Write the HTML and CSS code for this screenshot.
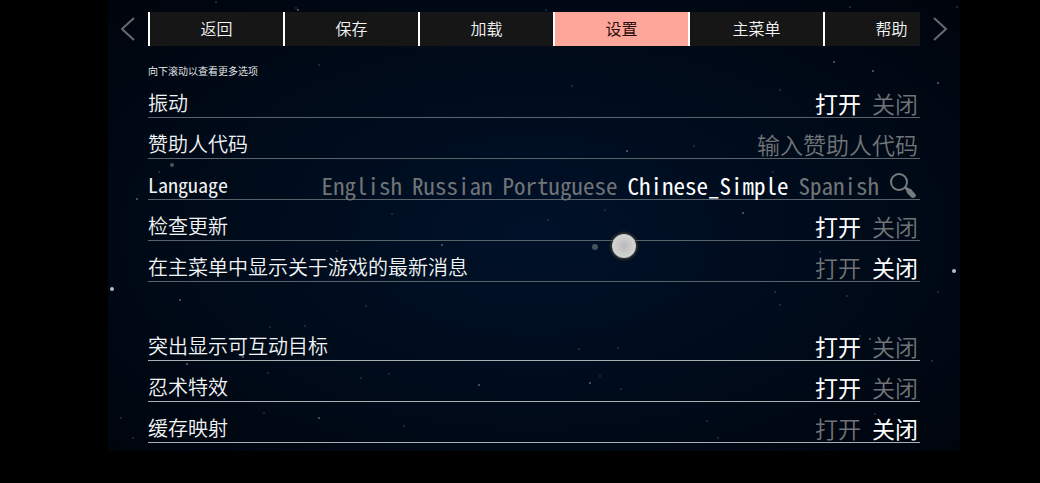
FILE: index.html
```html
<!doctype html>
<html lang="zh-CN">
<head>
	<title>设置</title>
	<meta charset="utf-8" />
	<meta name="viewport" content="width=device-width, initial-scale=1" />
	<link rel="stylesheet" href="styles.css">
</head>

<body>
	<div class="stage">
		<svg class="stars" viewBox="0 0 852 451" preserveAspectRatio="xMidYMid slice" aria-hidden="true">
			<g class="bright">
				<circle cx="4" cy="289" r="2" />
				<circle cx="846" cy="271" r="2" />
			</g>
			<g class="haze">
				<circle cx="64" cy="165" r="2" />
				<circle cx="487" cy="247" r="3" />
			</g>
			<g class="mid">
				<circle cx="29" cy="199" r="1" />
				<circle cx="72" cy="300" r="1" />
				<circle cx="79" cy="364" r="1" />
				<circle cx="135" cy="357" r="1" />
				<circle cx="211" cy="418" r="1" />
				<circle cx="371" cy="385" r="1" />
				<circle cx="482" cy="383" r="1" />
				<circle cx="519" cy="151" r="1" />
				<circle cx="334" cy="245" r="1" />
				<circle cx="635" cy="213" r="1" />
				<circle cx="762" cy="339" r="1" />
				<circle cx="765" cy="71" r="1" />
				<circle cx="726" cy="62" r="1" />
				<circle cx="830" cy="83" r="1" />
				<circle cx="190" cy="10" r="1" />
			</g>
			<g class="dim">
				<circle cx="108" cy="2" r="1" />
				<circle cx="188" cy="8" r="1" />
				<circle cx="211" cy="65" r="1" />
				<circle cx="438" cy="10" r="1" />
				<circle cx="464" cy="86" r="1" />
				<circle cx="742" cy="7" r="1" />
				<circle cx="849" cy="7" r="1" />
				<circle cx="672" cy="90" r="1" />
				<circle cx="586" cy="146" r="1" />
				<circle cx="665" cy="172" r="1" />
				<circle cx="51" cy="172" r="1" />
				<circle cx="284" cy="214" r="1" />
				<circle cx="440" cy="220" r="1" />
				<circle cx="497" cy="210" r="1" />
				<circle cx="229" cy="251" r="1" />
				<circle cx="712" cy="252" r="1" />
				<circle cx="258" cy="306" r="1" />
				<circle cx="162" cy="327" r="1" />
				<circle cx="197" cy="326" r="1" />
				<circle cx="160" cy="373" r="1" />
				<circle cx="253" cy="378" r="1" />
				<circle cx="281" cy="374" r="1" />
				<circle cx="13" cy="418" r="1" />
				<circle cx="25" cy="438" r="1" />
				<circle cx="156" cy="413" r="1" />
				<circle cx="296" cy="426" r="1" />
				<circle cx="471" cy="349" r="1" />
				<circle cx="510" cy="348" r="1" />
				<circle cx="492" cy="376" r="1" />
				<circle cx="513" cy="389" r="1" />
				<circle cx="599" cy="421" r="1" />
				<circle cx="610" cy="438" r="1" />
				<circle cx="667" cy="292" r="1" />
				<circle cx="672" cy="305" r="1" />
				<circle cx="739" cy="296" r="1" />
				<circle cx="752" cy="336" r="1" />
				<circle cx="824" cy="361" r="1" />
				<circle cx="830" cy="292" r="1" />
				<circle cx="767" cy="414" r="1" />
			</g>
		</svg>

		<nav class="topBar">
			<button class="arrow" type="button" aria-label="上一页"><svg width="14" height="24" viewBox="0 0 14 24"><path d="M13 1L1 12L13 23" /></svg></button>
			<div class="tabs">
				<button class="tab" type="button">返回</button>
				<button class="tab" type="button">保存</button>
				<button class="tab" type="button">加载</button>
				<button class="tab active" type="button">设置</button>
				<button class="tab" type="button">主菜单</button>
				<button class="tab" type="button">帮助</button>
			</div>
			<button class="arrow" type="button" aria-label="下一页"><svg width="14" height="24" viewBox="0 0 14 24"><path d="M1 1L13 12L1 23" /></svg></button>
		</nav>

		<form class="settings">
			<p class="hint">向下滚动以查看更多选项</p>
			<div class="group">
				<div class="row" role="radiogroup" aria-labelledby="vibration">
					<span class="name" id="vibration">振动</span>
					<div class="options">
						<label><input type="radio" name="vibration" checked><span>打开</span></label>
						<label><input type="radio" name="vibration"><span>关闭</span></label>
					</div>
				</div>
				<div class="row">
					<label class="name" for="code">赞助人代码</label>
					<input class="code" id="code" type="text" placeholder="输入赞助人代码">
				</div>
				<div class="row" role="radiogroup" aria-labelledby="language">
					<span class="name latin" id="language">Language</span>
					<div class="options latin">
						<label><input type="radio" name="language"><span>English</span></label>
						<label><input type="radio" name="language"><span>Russian</span></label>
						<label><input type="radio" name="language"><span>Portuguese</span></label>
						<label><input type="radio" name="language" checked><span>Chinese_Simple</span></label>
						<label><input type="radio" name="language"><span>Spanish</span></label>
						<button class="search" type="button" aria-label="搜索">
							<svg width="28" height="26" viewBox="0 0 28 26">
								<circle cx="10" cy="10" r="8" fill="none" stroke="currentColor" stroke-width="2" />
								<path d="M15 16L17 14L19 16L22 17L27 23Q27 26 23 26L18 21L17 18Z" fill="currentColor" />
							</svg>
						</button>
					</div>
				</div>
				<div class="row" role="radiogroup" aria-labelledby="updates">
					<span class="name" id="updates">检查更新</span>
					<div class="options">
						<label><input type="radio" name="updates" checked><span>打开</span></label>
						<label><input type="radio" name="updates"><span>关闭</span></label>
					</div>
				</div>
				<div class="row" role="radiogroup" aria-labelledby="news">
					<span class="name" id="news">在主菜单中显示关于游戏的最新消息</span>
					<div class="options">
						<label><input type="radio" name="news"><span>打开</span></label>
						<label><input type="radio" name="news" checked><span>关闭</span></label>
					</div>
				</div>
			</div>
			<div class="group strong">
				<div class="row" role="radiogroup" aria-labelledby="targets">
					<span class="name" id="targets">突出显示可互动目标</span>
					<div class="options">
						<label><input type="radio" name="targets" checked><span>打开</span></label>
						<label><input type="radio" name="targets"><span>关闭</span></label>
					</div>
				</div>
				<div class="row" role="radiogroup" aria-labelledby="effects">
					<span class="name" id="effects">忍术特效</span>
					<div class="options">
						<label><input type="radio" name="effects" checked><span>打开</span></label>
						<label><input type="radio" name="effects"><span>关闭</span></label>
					</div>
				</div>
				<div class="row" role="radiogroup" aria-labelledby="cache">
					<span class="name" id="cache">缓存映射</span>
					<div class="options">
						<label><input type="radio" name="cache"><span>打开</span></label>
						<label><input type="radio" name="cache" checked><span>关闭</span></label>
					</div>
				</div>
			</div>
		</form>
		<div class="pointer"></div>
	</div>
</body>
</html>
```
FILE: styles.css
```css
* {
	box-sizing: border-box;
}
body {
	margin: 0;
	background-color: #000;
	color: #f2f4f5;
	font-family: "Noto Sans CJK SC", sans-serif;
	font-weight: 350;
}
button, input {
	margin: 0;
	padding: 0;
	border: 0;
	background: none;
	color: inherit;
	font: inherit;
}
.stage {
	position: relative;
	margin: 0 80px 0 108px;
	padding: 12px 0 8px;
	background: radial-gradient(ellipse at 50% 52%, #001129 0%, #000c1c 45%, #00040c 100%);
}
.stars {
	position: absolute;
	top: 0;
	left: 0;
	width: 100%;
	height: 100%;
}
.bright { fill: #b4bcc4; }
.haze { fill: #46525f; }
.mid { fill: #5b6670; }
.dim { fill: #27323e; }

/* top tabs */
.topBar {
	position: relative;
	display: flex;
	height: 34px;
}
.arrow {
	flex: 0 0 40px;
	display: flex;
	align-items: center;
	justify-content: center;
}
.arrow path {
	fill: none;
	stroke: #666a6e;
	stroke-width: 2;
}
.tabs {
	flex: 1;
	display: flex;
	overflow: hidden;
}
.tab {
	flex: 0 0 135px;
	padding-bottom: 2px;
	border-left: 2px solid #fff;
	background-color: #161616;
	font-size: 16px;
	line-height: 32px;
}
.tab.active {
	background-color: #ffa69b;
	color: #2a0d0a;
	font-weight: 400;
}

/* settings list */
.settings {
	position: relative;
	padding: 0 40px;
}
.hint {
	margin: 0;
	padding-top: 18px;
	font-size: 10px;
	line-height: 13px;
}
.group.strong {
	margin-top: 38px;
}
.row {
	display: flex;
	align-items: center;
	justify-content: space-between;
	height: 41px;
	padding-top: 12px;
	border-bottom: 1px solid #59636b;
}
.strong .row {
	border-bottom-color: #a9b0b4;
}
.name {
	font-size: 20px;
	line-height: 28px;
}
.options {
	display: flex;
	align-items: center;
	gap: 11px;
	padding-right: 2px;
	font-size: 23px;
	line-height: 28px;
}
.options input {
	position: absolute;
	opacity: 0;
}
.options span {
	color: #717477;
}
.options input:checked + span {
	color: #fff;
	font-weight: 400;
}
.latin {
	font-family: "Noto Sans Mono CJK SC", "DejaVu Sans Mono", monospace;
}
.options.latin {
	gap: 10px;
	padding-right: 3px;
}
.options.latin input:checked + span {
	font-weight: 350;
}
.code {
	flex: 1;
	min-width: 0;
	padding-right: 2px;
	font-size: 23px;
	line-height: 28px;
	text-align: right;
}
.code::placeholder {
	color: #717477;
	opacity: 1;
}
.search {
	display: flex;
	color: #777b7e;
}

/* touch marker */
.pointer {
	position: absolute;
	left: 504px;
	top: 234px;
	width: 24px;
	height: 24px;
	border-radius: 50%;
	background: radial-gradient(circle, #b9b9bd 0%, #d2d2cf 60%, #c4c4bc 100%);
	box-shadow: 0 0 3px 1px #4a4d3c;
}
```
